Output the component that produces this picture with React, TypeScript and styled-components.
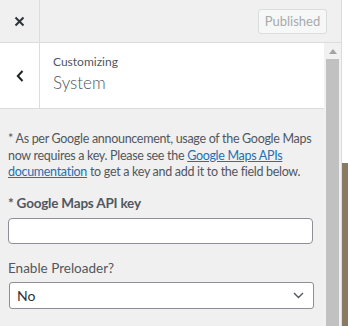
import React from "react";
import styled, { createGlobalStyle } from "styled-components";

const Global = createGlobalStyle`
  html, body { margin: 0; padding: 0; }
  body { width: 348px; height: 326px; overflow: hidden; background: #fff;
    font-family: "Lato", "Open Sans", sans-serif; }
  * { box-sizing: border-box; }
`;

const Frame = styled.div`
  display: flex;
  width: 348px;
  height: 326px;
  overflow: hidden;
`;

const Panel = styled.div`
  width: 342px;
  flex: none;
  display: flex;
  flex-direction: column;
  background: #f0f0f1;
  border-right: 1px solid #dcdcde;
`;

const Preview = styled.div`
  flex: 1;
  display: flex;
  flex-direction: column;
`;

const PreviewTop = styled.div`
  height: 163px;
  background: #ffffff;
`;

const PreviewBottom = styled.div`
  flex: 1;
  background: #8b7a62;
`;

const Header = styled.div`
  height: 43px;
  flex: none;
  display: flex;
  align-items: center;
  border-bottom: 1px solid #dcdcde;
  background: #f0f0f1;
`;

const CloseButton = styled.div`
  width: 40px;
  height: 42px;
  display: flex;
  align-items: center;
  justify-content: center;
  border-right: 1px solid #dcdcde;
  color: #2c3338;
`;

const HeaderSpacer = styled.div`
  flex: 1;
`;

const PublishedButton = styled.div`
  height: 25px;
  width: 69px;
  margin-right: 14px;
  display: flex;
  align-items: center;
  justify-content: center;
  border: 1px solid #dcdcde;
  border-radius: 3px;
  background: #f6f7f7;
  color: #a7aaad;
  font-size: 13px;
`;

const Body = styled.div`
  flex: 1;
  display: flex;
  min-height: 0;
`;

const Scroller = styled.div`
  flex: 1;
  display: flex;
  flex-direction: column;
  min-width: 0;
`;

const SectionHeader = styled.div`
  height: 66px;
  flex: none;
  display: flex;
  background: #ffffff;
  border-bottom: 1px solid #dcdcde;
`;

const BackButton = styled.div`
  width: 40px;
  display: flex;
  align-items: center;
  justify-content: center;
  border-right: 1px solid #dcdcde;
  color: #1d2327;
`;

const TitleBlock = styled.div`
  padding: 11px 0 0 13px;
  display: flex;
  flex-direction: column;
`;

const Small = styled.span`
  font-size: 12px;
  line-height: 16px;
  color: #50575e;
`;

const Big = styled.span`
  font-size: 17px;
  line-height: 26px;
  font-weight: 300;
  color: #50575e;
`;

const Content = styled.div`
  padding: 22px 8px 0 8px;
  display: flex;
  flex-direction: column;
`;

const Notice = styled.p`
  margin: 0;
  font-size: 12.5px;
  letter-spacing: -0.3px;
  line-height: 16.5px;
  color: #50575e;
  a { color: #2271b1; text-decoration: underline; }
`;

const Label = styled.div<{ $bold?: boolean }>`
  font-size: 13.5px;
  font-weight: ${(p) => (p.$bold ? 700 : 400)};
  letter-spacing: ${(p) => (p.$bold ? "-0.2px" : "0")};
  color: #50575e;
  line-height: 20px;
  margin-top: ${(p) => (p.$bold ? "12px" : "14px")};
`;

const TextInput = styled.div`
  margin-top: 5px;
  width: 305px;
  height: 26px;
  background: #fff;
  border: 1px solid #8c8f94;
  border-radius: 4px;
`;

const Select = styled.div`
  margin: 4px 0 0 1px;
  width: 305px;
  height: 27px;
  background: #fff;
  border: 1px solid #8c8f94;
  border-radius: 3px;
  display: flex;
  align-items: center;
  justify-content: space-between;
  padding: 0 9px 0 7px;
  font-size: 14px;
  color: #2c3338;
`;

const Scrollbar = styled.div`
  width: 17px;
  flex: none;
  background: #f1f1f1;
  display: flex;
  flex-direction: column;
  align-items: center;
`;

const ArrowBox = styled.div`
  height: 16px;
  width: 100%;
  display: flex;
  align-items: center;
  justify-content: center;
`;

const Thumb = styled.div`
  width: 13px;
  flex: 1;
  background: #c1c1c1;
`;

export default function App() {
  return (
    <>
      <Global />
      <Frame>
        <Panel>
          <Header>
            <CloseButton>
              <svg width="11" height="11" viewBox="0 0 11 11">
                <path d="M1.5 1.5 L9.5 9.5 M9.5 1.5 L1.5 9.5" stroke="#2c3338" strokeWidth="2" />
              </svg>
            </CloseButton>
            <HeaderSpacer />
            <PublishedButton>Published</PublishedButton>
          </Header>
          <Body>
            <Scroller>
              <SectionHeader>
                <BackButton>
                  <svg width="8" height="12" viewBox="0 0 8 12">
                    <path d="M6.5 1 L1.8 6 L6.5 11" fill="none" stroke="#1d2327" strokeWidth="2" />
                  </svg>
                </BackButton>
                <TitleBlock>
                  <Small>Customizing</Small>
                  <Big>System</Big>
                </TitleBlock>
              </SectionHeader>
              <Content>
                <Notice>
                  * As per Google announcement, usage of the Google Maps now requires a key. Please see the{" "}
                  <a>Google Maps APIs documentation</a> to get a key and add it to the field below.
                </Notice>
                <Label $bold>* Google Maps API key</Label>
                <TextInput />
                <Label>Enable Preloader?</Label>
                <Select>
                  <span>No</span>
                  <svg width="11" height="7" viewBox="0 0 11 7">
                    <path d="M1 1 L5.5 5.5 L10 1" fill="none" stroke="#50575e" strokeWidth="1.4" />
                  </svg>
                </Select>
                <Label>Enable scroll-to-top</Label>
              </Content>
            </Scroller>
            <Scrollbar>
              <ArrowBox>
                <svg width="8" height="5" viewBox="0 0 8 5">
                  <path d="M0 5 L4 0 L8 5 Z" fill="#a3a3a3" />
                </svg>
              </ArrowBox>
              <Thumb />
            </Scrollbar>
          </Body>
        </Panel>
        <Preview>
          <PreviewTop />
          <PreviewBottom />
        </Preview>
      </Frame>
    </>
  );
}
